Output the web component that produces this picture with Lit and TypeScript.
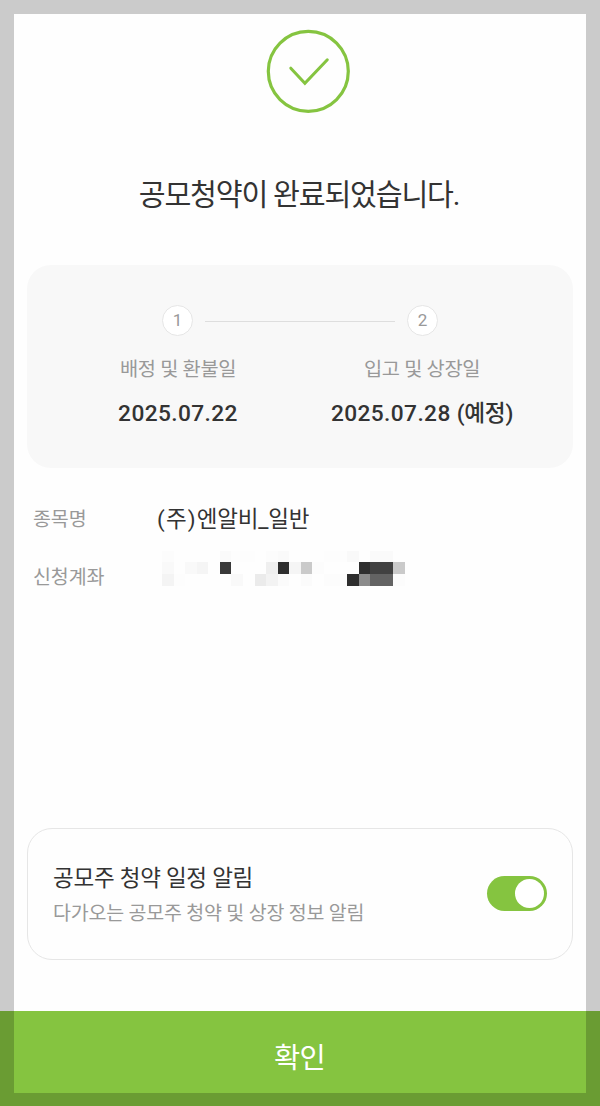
import { LitElement, html, css } from "lit";
import { customElement } from "lit/decorators.js";

// Shade of each tile of the masked account number; "" leaves the tile blank.
const MASK_ROWS: string[][] = [
  ["fc", "", "", "", "", "fa", "fd", "fd", "", "fc", "fa", "", "", "", "fd", "fd", "f9", "", "fa", "fa", ""],
  ["f9", "", "f9", "f5", "", "39", "", "", "", "ef", "2e", "f5", "ca", "fc", "", "", "", "2e", "41", "41", "ca"],
  ["f4", "fd", "", "", "", "", "f9", "", "eb", "f3", "fb", "", "fb", "", "fc", "fc", "2e", "8b", "63", "63", "fc"],
];

@customElement("masked-number")
export class MaskedNumber extends LitElement {
  static styles = css`
    :host { display: block; width: 243px; height: 35px; }
    .grid {
      display: grid;
      grid-template-columns: repeat(21, 1fr);
      grid-template-rows: repeat(3, 1fr);
      width: 100%;
      height: 100%;
    }
  `;
  render() {
    return html`<div class="grid">
      ${MASK_ROWS.flat().map((s) => html`<i style="background:${s ? `#${s}${s}${s}` : "transparent"}"></i>`)}
    </div>`;
  }
}

@customElement("app-root")
export class AppRoot extends LitElement {
  static styles = css`
    * { box-sizing: border-box; }
    :host {
      display: block;
      position: relative;
      width: 600px;
      height: 1106px;
      overflow: hidden;
      background: #fefefe;
      color: #333;
      font-family: Roboto, "Noto Sans CJK KR", sans-serif;
      white-space: nowrap;
    }
    .page { display: flex; flex-direction: column; height: 100%; }
    .done { display: block; width: 84px; height: 84px; margin: 29px 0 0 266px; }
    .title {
      margin: 60px 2px 0 0;
      height: 44px;
      line-height: 44px;
      text-align: center;
      font-size: 29.2px;
      font-weight: 400;
      letter-spacing: -1.2px;
    }
    .schedule {
      margin: 48px 27px 0;
      height: 203px;
      border-radius: 24px;
      background: #f8f8f8;
      display: grid;
      grid-template-columns: 301px 1fr;
      align-content: start;
      padding-top: 40px;
    }
    .steps {
      grid-column: 1 / -1;
      display: flex;
      align-items: center;
      height: 32px;
      padding-left: 135px;
      gap: 12px;
    }
    .num {
      width: 31px;
      height: 31px;
      margin-bottom: 1px;
      border: 1.5px solid #e6e6e6;
      border-radius: 50%;
      background: #fff;
      color: #999;
      font-size: 17px;
      line-height: 29px;
      text-align: center;
    }
    .line { width: 190px; height: 1px; background: #dedede; }
    .step { width: 302px; text-align: center; }
    .second { justify-self: start; margin-left: -57px; }
    .label { color: #999; font-size: 19.8px; letter-spacing: -0.35px; line-height: 30px; margin-top: 18px; }
    .date { font-size: 22.7px; font-weight: 500; line-height: 34px; margin-top: 12px; letter-spacing: 0.4px; }
    .note { letter-spacing: -0.3px; }
    .info {
      display: grid;
      grid-template-columns: 124px 1fr;
      grid-template-rows: 58px 58px;
      align-items: center;
      margin: 20px 0 0 33px;
    }
    .key { color: #999; font-size: 19.5px; letter-spacing: -0.1px; }
    .name { font-size: 22.5px; letter-spacing: -0.2px; }
    .corp { letter-spacing: 1.2px; }
    .mask { margin: -14px 0 0 5px; }
    .alarm {
      margin: 224px 27px 0;
      height: 132px;
      border: 1.5px solid #e6e6e6;
      border-radius: 25px;
      display: flex;
      align-items: center;
      justify-content: space-between;
      padding: 0 25px;
    }
    .words { padding-top: 4px; }
    .heading { font-size: 22.5px; line-height: 36px; letter-spacing: -0.25px; }
    .sub { font-size: 19.5px; line-height: 36px; letter-spacing: -0.22px; color: #999; }
    .toggle {
      width: 60px;
      height: 35px;
      margin-bottom: 1px;
      border-radius: 18px;
      background: #85c440;
      display: flex;
      align-items: center;
      justify-content: flex-end;
      padding-right: 3.5px;
    }
    .knob { width: 29px; height: 29px; border-radius: 50%; background: #fff; }
    .confirm {
      margin-top: auto;
      height: 95px;
      border: 0;
      padding: 0 1px 6px 0;
      background: #85c440;
      color: #fff;
      font: inherit;
      font-size: 28.5px;
      letter-spacing: -0.6px;
    }
    .frame {
      position: absolute;
      inset: 0;
      border: solid rgba(0, 0, 0, 0.2);
      border-width: 14px 14px 13px;
      pointer-events: none;
    }
  `;

  render() {
    return html`
      <div class="page">
        <svg class="done" viewBox="0 0 84 84" fill="none" stroke="#85c440">
          <circle cx="42.3" cy="42.3" r="40" stroke-width="3.2" />
          <path d="M24.8 39.2 38.9 54.3 61.3 30.8" stroke-width="3" stroke-linecap="round" />
        </svg>
        <h1 class="title">공모청약이 완료되었습니다.</h1>
        <section class="schedule">
          <div class="steps">
            <span class="num">1</span><span class="line"></span><span class="num">2</span>
          </div>
          <div class="step">
            <div class="label">배정 및 환불일</div>
            <div class="date">2025.07.22</div>
          </div>
          <div class="step second">
            <div class="label">입고 및 상장일</div>
            <div class="date">2025.07.28 <span class="note">(예정)</span></div>
          </div>
        </section>
        <section class="info">
          <span class="key">종목명</span><span class="name"><span class="corp">(주)</span>엔알비_일반</span>
          <span class="key">신청계좌</span><masked-number class="mask"></masked-number>
        </section>
        <section class="alarm">
          <div class="words">
            <div class="heading">공모주 청약 일정 알림</div>
            <div class="sub">다가오는 공모주 청약 및 상장 정보 알림</div>
          </div>
          <div class="toggle"><span class="knob"></span></div>
        </section>
        <button class="confirm">확인</button>
      </div>
      <div class="frame"></div>
    `;
  }
}
